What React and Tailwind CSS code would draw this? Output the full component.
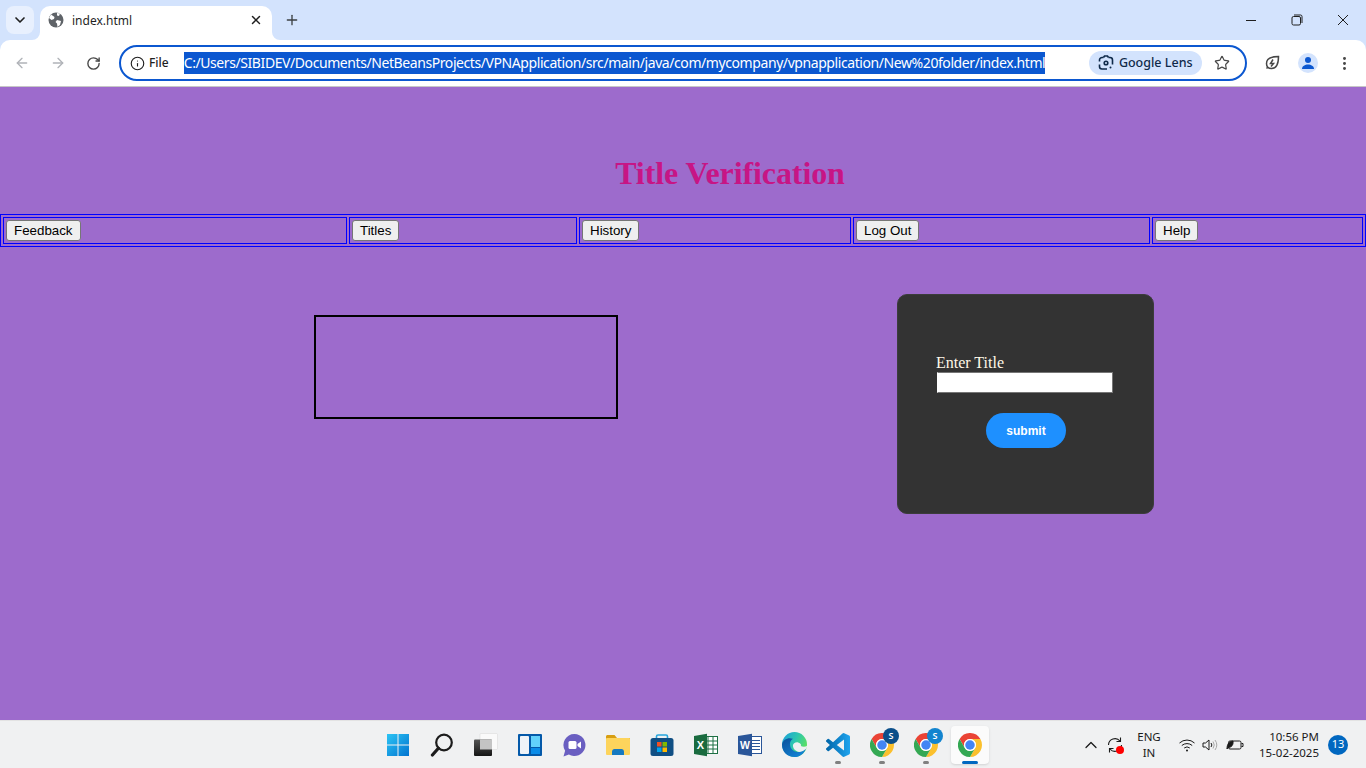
import React from 'react';
import { ArrowLeft, ArrowRight, RotateCw, Info, Star, MoreVertical, X, Plus, ChevronDown, ChevronUp } from 'lucide-react';

const uiFont = { fontFamily: '"Noto Sans", sans-serif' };

const navCells = [
  { label: 'Feedback', width: 'w-[344px]' },
  { label: 'Titles', width: 'w-[228px]' },
  { label: 'History', width: 'w-[272px]' },
  { label: 'Log Out', width: 'w-[297px]' },
  { label: 'Help', width: 'w-[211px]' },
];

function Chrome({ size = 24 }) {
  return (
    <svg width={size} height={size} viewBox="0 0 48 48">
      <path fill="#ea4335" d="M3.2 12A24 24 0 0 1 44.78 12H24A12 12 0 0 0 13.6 30Z" />
      <path fill="#fbc02d" d="M44.78 12A24 24 0 0 1 24 48L34.39 30A12 12 0 0 0 24 12Z" />
      <path fill="#34a853" d="M24 48A24 24 0 0 1 3.2 12L13.6 30A12 12 0 0 0 34.39 30Z" />
      <circle cx="24" cy="24" r="12" fill="#fff" />
      <circle cx="24" cy="24" r="9.5" fill="#4285f4" />
    </svg>
  );
}

function StartIcon() {
  return (
    <svg width="24" height="24" viewBox="0 0 24 24">
      <defs>
        <linearGradient id="win" x1="0" y1="0" x2="1" y2="1">
          <stop offset="0" stopColor="#2cc4f4" />
          <stop offset="1" stopColor="#0274d0" />
        </linearGradient>
      </defs>
      <path fill="url(#win)" d="M1 1h10.5v10.5H1zM12.5 1H23v10.5H12.5zM1 12.5h10.5V23H1zM12.5 12.5H23V23H12.5z" />
    </svg>
  );
}

function SearchIcon() {
  return (
    <svg width="24" height="24" viewBox="0 0 24 24" fill="none" stroke="#1c1c1c" strokeLinecap="round">
      <circle cx="14" cy="9.5" r="7.8" strokeWidth="2.2" />
      <path d="M8.4 15.2 2.4 22" strokeWidth="3.2" />
    </svg>
  );
}

function TaskViewIcon() {
  return (
    <svg width="24" height="24" viewBox="0 0 24 24">
      <defs>
        <linearGradient id="taskDark" x1="0" y1="0" x2="0" y2="1">
          <stop offset="0" stopColor="#555" />
          <stop offset="1" stopColor="#151515" />
        </linearGradient>
      </defs>
      <rect x="6" y="0.500" width="17.500" height="16" rx="1" fill="#fafafa" stroke="#dcdcdc" strokeWidth=".6" />
      <rect x="0" y="6.500" width="18" height="16.500" rx="1" fill="url(#taskDark)" />
      <rect x="6" y="6.500" width="12" height="10" fill="#c4c4c4" />
    </svg>
  );
}

function WidgetsIcon() {
  return (
    <svg width="24" height="24" viewBox="0 0 24 24">
      <rect width="24" height="22" y="1" rx="1" fill="#0459a9" />
      <rect x="2" y="3" width="9" height="18" rx="1" fill="#eef3f8" />
      <rect x="13" y="3" width="9" height="11" fill="#62d1fb" />
      <rect x="13" y="15" width="9" height="6" fill="#0a8ce8" />
    </svg>
  );
}

function MeetIcon() {
  return (
    <svg width="24" height="24" viewBox="0 0 24 24">
      <path fill="#6a5fc1" d="M12.5 1a11 11 0 1 1-5.6 20.5L1.5 23.4l1.6-5.7A11 11 0 0 1 12.5 1z" />
      <rect x="6.5" y="8" width="8" height="8" rx="1.5" fill="#fff" />
      <path fill="#fff" d="M15.5 11 19 8.5v7L15.5 13z" />
    </svg>
  );
}

function FolderIcon() {
  return (
    <svg width="24" height="24" viewBox="0 0 24 24">
      <path fill="#d79e12" d="M0 3.5C0 2.7.7 2 1.5 2h7l2.5 3H24v3H0z" />
      <rect x="0" y="5" width="24" height="17" rx="1" fill="#fdd45c" />
      <path fill="#1679c1" d="M6 19c0-2 1-3 2.500-3h7c1.500 0 2.500 1 2.500 3v3H6z" />
    </svg>
  );
}

function StoreIcon() {
  return (
    <svg width="24" height="24" viewBox="0 0 24 24" fill="none">
      <path d="M6.500 7V3.500c0-1 .5-1.500 1.500-1.500h8c1 0 1.500.5 1.500 1.500V7" stroke="#26a5dd" strokeWidth="1.600" />
      <rect x="0.500" y="5" width="23" height="18" rx="2.500" fill="#104f84" />
      <rect x="7" y="9" width="4.500" height="4.500" fill="#f25022" />
      <rect x="12.500" y="9" width="4.500" height="4.500" fill="#7fba00" />
      <rect x="7" y="14.500" width="4.500" height="4.500" fill="#00a4ef" />
      <rect x="12.500" y="14.500" width="4.500" height="4.500" fill="#ffb900" />
    </svg>
  );
}

function ExcelIcon() {
  return (
    <svg width="24" height="24" viewBox="0 0 24 24">
      <rect x="9" y="3.500" width="14.500" height="17" fill="#fff" stroke="#1d7044" />
      <path stroke="#1d7044" strokeWidth="1" d="M14 4v16M19 4v16M10 8h13M10 12h13M10 16h13" fill="none" />
      <path fill="#1a6b3f" d="M0 3 13 0.800v22.400L0 21z" />
      <text x="6.400" y="16.200" textAnchor="middle" fontSize="11" fontWeight="700" fill="#fff" fontFamily="Liberation Sans, sans-serif">X</text>
    </svg>
  );
}

function WordIcon() {
  return (
    <svg width="24" height="24" viewBox="0 0 24 24">
      <rect x="9" y="3.500" width="14.500" height="17" fill="#fff" stroke="#2a5699" />
      <path stroke="#2a5699" strokeWidth="1" d="M14 7.500h8M14 10.500h8M14 13.500h8M14 16.500h8" fill="none" />
      <path fill="#2a5699" d="M0 3 14 0.800v22.400L0 21z" />
      <text x="7" y="16" textAnchor="middle" fontSize="10.500" fontWeight="700" fill="#fff" fontFamily="Liberation Sans, sans-serif">W</text>
    </svg>
  );
}

function EdgeIcon() {
  return (
    <svg width="25" height="25" viewBox="0 0 24 24">
      <defs>
        <linearGradient id="edgeA" x1="0" y1="0" x2="1" y2="0.500">
          <stop offset="0" stopColor="#1a9bdf" />
          <stop offset="0.550" stopColor="#2cc6b0" />
          <stop offset="1" stopColor="#5be062" />
        </linearGradient>
        <linearGradient id="edgeB" x1="0" y1="0" x2="0.800" y2="1">
          <stop offset="0" stopColor="#0a4f9a" />
          <stop offset="1" stopColor="#1386d8" />
        </linearGradient>
      </defs>
      <circle cx="12" cy="12" r="12" fill="url(#edgeA)" />
      <path fill="#eef1f3" d="M10.500 13C10.500 10.800 13 9.500 15.500 10 18 10.500 19 12.500 18 13.500 20 14.500 22 14.500 24 13.500 24 15 23.500 16 23 16.500 20 19.500 16.500 20 13.500 18 11.500 17 10.500 15 10.500 13z" />
      <path fill="url(#edgeB)" d="M0 12C1 7 6 5 10.500 6.500 8 8 7 11 8 14 9 18 14 20 18 19 20.500 18.300 22 17 23 16 21 21 17 24 12 24 5 24 0 19 0 12z" />
    </svg>
  );
}

function VsCodeIcon() {
  return (
    <svg width="24" height="24" viewBox="0 0 24 24">
      <defs>
        <linearGradient id="vsc" x1="0" y1="0" x2="1" y2="0">
          <stop offset="0" stopColor="#0065a9" />
          <stop offset="1" stopColor="#1fa4ee" />
        </linearGradient>
      </defs>
      <path fill="url(#vsc)" d="M23.150 2.587L18.210.21a1.494 1.494 0 0 0-1.705.29l-9.460 8.630-4.120-3.128a.999.999 0 0 0-1.276.057L.327 7.261A1 1 0 0 0 .326 8.740L3.899 12 .326 15.260a1 1 0 0 0 .001 1.479L1.650 17.940a.999.999 0 0 0 1.276.057l4.120-3.128 9.460 8.630a1.492 1.492 0 0 0 1.704.29l4.942-2.377A1.500 1.500 0 0 0 24 20.060V3.939a1.500 1.500 0 0 0-.850-1.352zm-5.146 14.861L10.826 12l7.178-5.448v10.896z" />
    </svg>
  );
}

function ProfileChrome({ badge }) {
  return (
    <div className="relative">
      <Chrome />
      <span className={`absolute -top-[5px] -right-[5px] flex h-4 w-4 items-center justify-center rounded-full text-[9px] font-semibold text-white ${badge}`}>S</span>
    </div>
  );
}

const taskbarApps = [
  { key: 'start', node: <StartIcon /> },
  { key: 'search', node: <SearchIcon /> },
  { key: 'task', node: <TaskViewIcon /> },
  { key: 'widgets', node: <WidgetsIcon /> },
  { key: 'meet', node: <MeetIcon /> },
  { key: 'folder', node: <FolderIcon /> },
  { key: 'store', node: <StoreIcon /> },
  { key: 'excel', node: <ExcelIcon /> },
  { key: 'word', node: <WordIcon /> },
  { key: 'edge', node: <EdgeIcon /> },
  { key: 'code', node: <VsCodeIcon />, dot: true },
  { key: 'chrome1', node: <ProfileChrome badge="bg-[#0b4f8a]" />, dot: true },
  { key: 'chrome2', node: <ProfileChrome badge="bg-[#1284cf]" />, dot: true },
  { key: 'chrome3', node: <Chrome />, active: true },
];

function TabStrip() {
  return (
    <div className="flex h-10 items-start bg-[#d3e3fd]" style={uiFont}>
      <div className="ml-[6px] mt-[6px] flex h-7 w-7 items-center justify-center rounded-lg bg-[#e8f0fe]">
        <ChevronDown size={16} strokeWidth={2.5} color="#1f1f1f" />
      </div>
      <div className="relative ml-[6px] mt-[6px] flex h-[34px] w-[232px] items-center rounded-t-[10px] bg-white pb-[6px] pl-2">
        <svg width="16" height="16" viewBox="0 0 16 16">
          <circle cx="8" cy="8" r="7.500" fill="#5f6368" />
          <path fill="#fff" d="M3 2.500 6.500 5 6 7 3.500 8 1 6zM9 1l3 .5L11 4 9 3.500zM9 8l4 1-1 4-2.500 2L9 11.500 7.500 10z" />
        </svg>
        <span className="ml-2 pt-[2px] text-xs text-[#1f1f1f]">index.html</span>
        <X size={14} strokeWidth={2.5} color="#1f1f1f" className="absolute right-[9px] top-[7px]" />
        <svg className="absolute -left-2 bottom-0" width="8" height="8" viewBox="0 0 8 8"><path fill="#fff" d="M8 0v8H0a8 8 0 0 0 8-8z" /></svg>
        <svg className="absolute -right-2 bottom-0" width="8" height="8" viewBox="0 0 8 8"><path fill="#fff" d="M0 0v8h8a8 8 0 0 1-8-8z" /></svg>
      </div>
      <Plus size={16} strokeWidth={2} color="#3c4043" className="ml-3 mt-3" />
      <div className="ml-auto flex h-10 items-center">
        <div className="flex w-[46px] justify-center">
          <svg width="12" height="12" viewBox="0 0 12 12" stroke="#1f1f1f"><path d="M1 6.500h10" /></svg>
        </div>
        <div className="flex w-[46px] justify-center">
          <svg width="12" height="12" viewBox="0 0 12 12" fill="none" stroke="#1f1f1f">
            <rect x="1" y="2.500" width="8.500" height="8.500" rx="1.500" />
            <path d="M3 1h6.500A1.500 1.500 0 0 1 11 2.500V9" />
          </svg>
        </div>
        <div className="flex w-[46px] justify-center">
          <svg width="12" height="12" viewBox="0 0 12 12" stroke="#1f1f1f"><path d="M1 1l10 10M11 1 1 11" /></svg>
        </div>
      </div>
    </div>
  );
}

function Toolbar() {
  return (
    <div className="bg-[#d3e3fd]" style={uiFont}>
      <div className="flex h-[47px] items-center rounded-t-[10px] border-b border-[#c7c7c7] bg-white">
        <ArrowLeft size={16} strokeWidth={2} color="#b0b3b8" className="ml-[14px]" />
        <ArrowRight size={16} strokeWidth={2} color="#b0b3b8" className="ml-5" />
        <RotateCw size={15} strokeWidth={2.200} color="#474747" className="ml-[20px]" />
        <div className="ml-[18px] flex h-[36px] w-[1128px] items-center rounded-full border-2 border-[#0b57d0] pl-[9px]">
          <Info size={15} strokeWidth={1.800} color="#1f1f1f" />
          <span className="ml-[4px] text-xs font-medium text-[#1f1f1f]">File</span>
          <span className="ml-[15px] flex h-[22px] w-[861px] items-center whitespace-nowrap bg-[#0b57d0] pb-px text-[14px] tracking-[-0.42px] text-white">C:/Users/SIBIDEV/Documents/NetBeansProjects/VPNApplication/src/main/java/com/mycompany/vpnapplication/New%20folder/index.html</span>
          <div className="ml-[44px] flex h-[24px] w-[113px] items-center justify-center gap-[5px] rounded-full bg-[#d3e3fd]">
            <svg width="16" height="16" viewBox="0 0 16 16" fill="none" stroke="#0f2a4a" strokeWidth="1.600">
              <path d="M5.500 2.500H4A2.500 2.500 0 0 0 1.500 5v1.500M1.500 9.500V11.500A2.500 2.500 0 0 0 4 14h5M14.500 9.500V5A2.500 2.500 0 0 0 12 2.500h-1.500" />
              <path d="M5.500 2.500 6.500 1h3l1 1.500" />
              <circle cx="8" cy="8" r="1.800" />
              <circle cx="12.500" cy="12.500" r="1" fill="#0f2a4a" stroke="none" />
            </svg>
            <span className="text-[12.500px] font-medium text-[#0f2a4a]">Google Lens</span>
          </div>
          <Star size={16} strokeWidth={1.800} color="#474747" className="ml-3" />
        </div>
        <svg className="ml-[16px]" width="18" height="18" viewBox="0 0 18 18" fill="none" stroke="#474747" strokeWidth="1.500">
          <path d="M3.500 9.500C3.500 5 7 2.500 15.500 2.500c0 8-2.500 12-7 12-3 0-5-2-5-5z" />
          <path d="M3.500 14.500 5 13M10 5.500 7.500 9.500h3L8 12.500" />
        </svg>
        <div className="ml-[17px] flex h-5 w-5 items-center justify-center overflow-hidden rounded-full bg-[#d3e3fd]">
          <svg width="14" height="14" viewBox="0 0 14 14" fill="#0b57d0">
            <circle cx="7" cy="4" r="3" />
            <path d="M1 13c0-3 3-4.500 6-4.500s6 1.500 6 4.500z" />
          </svg>
        </div>
        <MoreVertical size={17} strokeWidth={2.200} color="#474747" className="ml-[18px]" />
      </div>
    </div>
  );
}

function Page() {
  return (
    <div className="flex-1 bg-[#9d6bcc]" style={{ fontFamily: '"Liberation Serif", serif' }}>
      <div className="h-[127px] pl-[94px] pt-[68px] text-center">
        <h1 className="text-[32px] font-bold leading-[37px] tracking-[-0.1px] text-[#c71585]">Title Verification</h1>
      </div>
      <div className="flex gap-[2px] border border-[#0000ff] p-[2px]" style={{ fontFamily: '"Liberation Sans", sans-serif' }}>
        {navCells.map((cell) => (
          <div key={cell.label} className={`${cell.width} shrink-0 border border-[#0000ff] p-[2px]`}>
            <button className="block h-[21px] rounded-[3px] border border-[#767676] bg-[#efefef] px-[7px] text-[13.33px] leading-[15px] text-black">{cell.label}</button>
          </div>
        ))}
      </div>
      <div className="flex items-start pl-[314px] pt-[47px]">
        <div className="mt-[21px] h-[104px] w-[304px] border-2 border-black" />
        <div className="ml-[279px] h-[220px] w-[257px] rounded-[10px] border border-[#3c3c3c] bg-[#333333] pl-[38px] pt-[59px]">
          <label className="block text-base leading-[18px] text-[#fff8e8]">Enter Title</label>
          <input className="ml-px block h-[21px] w-[176px] border border-[#767676] border-l-white bg-white" />
          <button className="ml-[50px] mt-5 h-[35px] w-[80px] rounded-full bg-[#1e90ff] text-xs font-bold text-white" style={{ fontFamily: '"Liberation Sans", sans-serif' }}>submit</button>
        </div>
      </div>
    </div>
  );
}

function Taskbar() {
  return (
    <div className="relative flex h-12 items-center justify-center border-t border-[#e3e3e3] bg-[#f0f1f2] pl-[2px]" style={uiFont}>
      <div className="flex">
        {taskbarApps.map((app) => (
          <div key={app.key} className="relative flex h-[38px] w-[44px] items-center justify-center">
            {app.active && <span className="absolute inset-y-0 left-[3px] right-[3px] rounded bg-[#fbfbfb] shadow-sm" />}
            <span className="relative">{app.node}</span>
            {app.dot && <span className="absolute bottom-0 h-[3px] w-[6px] rounded-full bg-[#808080]" />}
            {app.active && <span className="absolute bottom-0 h-[3px] w-4 rounded-full bg-[#0067c0]" />}
          </div>
        ))}
      </div>
      <div className="absolute inset-y-0 right-0 flex items-center text-[#1a1a1a]">
        <ChevronUp size={20} strokeWidth={1.500} color="#1a1a1a" />
        <div className="relative ml-[6px] h-4 w-4">
          <svg width="16" height="16" viewBox="0 0 16 16" fill="none" stroke="#1a1a1a" strokeWidth="1.100">
            <path d="M1.500 8A6.500 6.500 0 0 1 13 4M14.500 8A6.500 6.500 0 0 1 3 12" />
            <path d="M13.500 .5V4.500H9.500M2.500 15.500V11.500H6.500" />
          </svg>
          <span className="absolute -bottom-[1px] -right-[1px] h-2 w-2 rounded-full bg-[#f00]" />
        </div>
        <div className="ml-[6px] w-[40px] text-center text-[11.500px] leading-[16px]">ENG<br />IN</div>
        <svg className="ml-[10px]" width="16" height="16" viewBox="0 0 16 16" fill="none" stroke="#1a1a1a">
          <path d="M.5 6a11 11 0 0 1 15 0M2.800 8.500a8 8 0 0 1 10.400 0M5.200 11a4.500 4.500 0 0 1 5.600 0" />
          <circle cx="8" cy="13.500" r="1" fill="#1a1a1a" stroke="none" />
        </svg>
        <svg className="ml-[7px]" width="16" height="16" viewBox="0 0 16 16" fill="none" stroke="#1a1a1a">
          <path d="M1 6h2.500L7 3v10L3.500 10H1z" />
          <path d="M9 6a3 3 0 0 1 0 4" />
          <path d="M11 4.500a6 6 0 0 1 0 7M13 3a8.500 8.500 0 0 1 0 10" stroke="#a8a8a8" />
        </svg>
        <svg className="ml-[8px]" width="18" height="16" viewBox="0 0 18 16" fill="none" stroke="#1a1a1a">
          <rect x="2.500" y="4" width="12.500" height="8" rx="1.500" />
          <path d="M15.500 6.500h1.500v3h-1.500" />
          <path d="M1 12C1 7 3 4.500 7 4c.5 4-1.500 6.500-5 6.500z" fill="#1a1a1a" />
        </svg>
        <div className="ml-[9px] w-[66px] text-right text-[11.500px] leading-[16px]">10:56 PM<br />15-02-2025</div>
        <span className="ml-[9px] mr-[18px] flex h-5 w-5 items-center justify-center rounded-full bg-[#0067c0] text-[11px] text-white">13</span>
      </div>
    </div>
  );
}

export default function App() {
  return (
    <div className="flex h-[768px] w-[1366px] flex-col overflow-hidden">
      <TabStrip />
      <Toolbar />
      <Page />
      <Taskbar />
    </div>
  );
}
